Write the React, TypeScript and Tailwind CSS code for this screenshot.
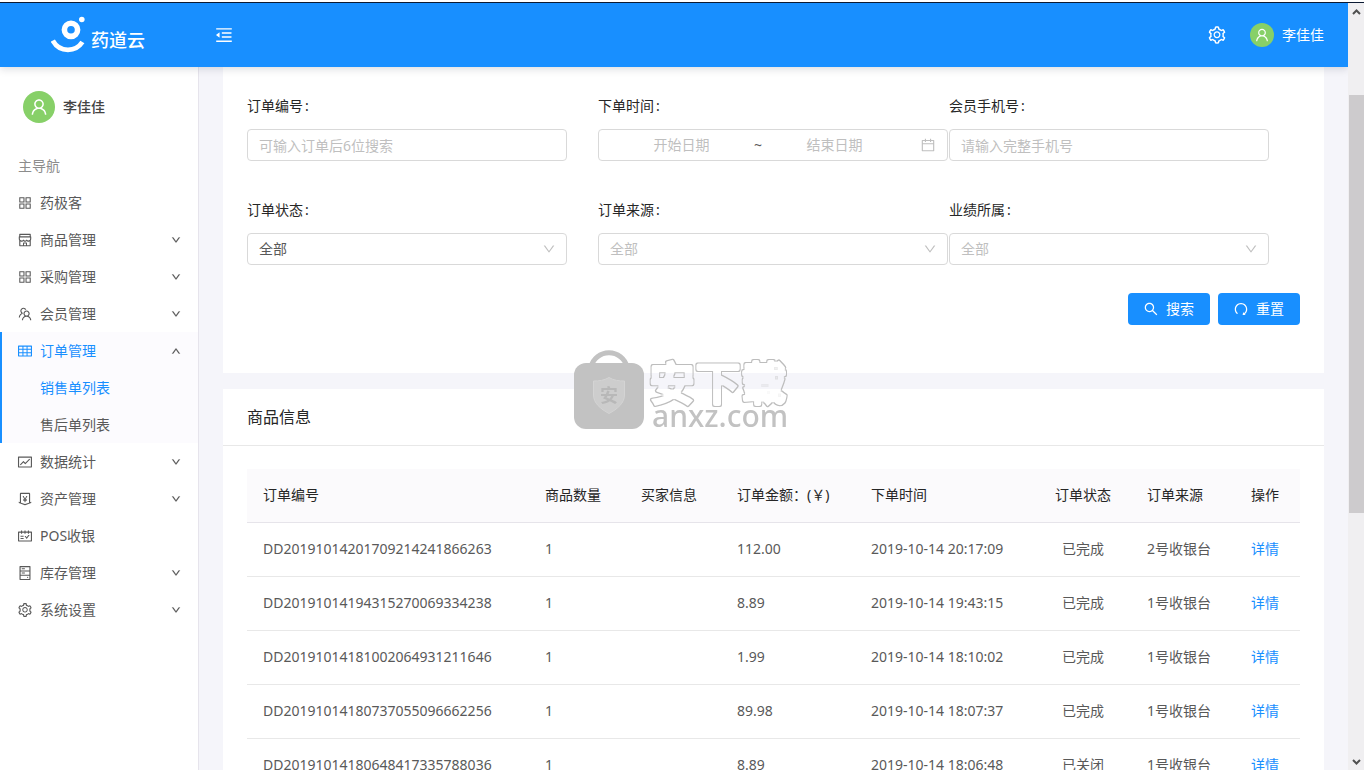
import type { ReactNode } from 'react';
import type { IconType } from 'react-icons';
import {
    AiOutlineAppstore,
    AiOutlineCalendar,
    AiOutlineDown,
    AiOutlineFund,
    AiOutlineHdd,
    AiOutlineMenuFold,
    AiOutlineMoneyCollect,
    AiOutlineRedo,
    AiOutlineSchedule,
    AiOutlineSearch,
    AiOutlineSetting,
    AiOutlineShop,
    AiOutlineTable,
    AiOutlineTeam,
    AiOutlineUp,
    AiOutlineUser,
} from 'react-icons/ai';

type NavItem = {
    label: string;
    icon: IconType;
    expandable?: boolean;
    children?: { label: string; active?: boolean }[];
};

const navItems: NavItem[] = [
    { label: '药极客', icon: AiOutlineAppstore },
    { label: '商品管理', icon: AiOutlineShop, expandable: true },
    { label: '采购管理', icon: AiOutlineAppstore, expandable: true },
    { label: '会员管理', icon: AiOutlineTeam, expandable: true },
    {
        label: '订单管理',
        icon: AiOutlineTable,
        expandable: true,
        children: [{ label: '销售单列表', active: true }, { label: '售后单列表' }],
    },
    { label: '数据统计', icon: AiOutlineFund, expandable: true },
    { label: '资产管理', icon: AiOutlineMoneyCollect, expandable: true },
    { label: 'POS收银', icon: AiOutlineSchedule },
    { label: '库存管理', icon: AiOutlineHdd, expandable: true },
    { label: '系统设置', icon: AiOutlineSetting, expandable: true },
];

const orders = [
    { id: 'DD20191014201709214241866263', count: 1, amount: '112.00', time: '2019-10-14 20:17:09', status: '已完成', source: '2号收银台' },
    { id: 'DD20191014194315270069334238', count: 1, amount: '8.89', time: '2019-10-14 19:43:15', status: '已完成', source: '1号收银台' },
    { id: 'DD20191014181002064931211646', count: 1, amount: '1.99', time: '2019-10-14 18:10:02', status: '已完成', source: '1号收银台' },
    { id: 'DD20191014180737055096662256', count: 1, amount: '89.98', time: '2019-10-14 18:07:37', status: '已完成', source: '1号收银台' },
    { id: 'DD20191014180648417335788036', count: 1, amount: '8.89', time: '2019-10-14 18:06:48', status: '已关闭', source: '1号收银台' },
];

function Logo() {
    return (
        <svg width="34" height="37" viewBox="51 16 34 37" fill="none" stroke="#fff" aria-hidden="true">
            <circle cx="71" cy="29.8" r="6.6" strokeWidth="5.6" />
            <circle cx="81.8" cy="19.5" r="2.8" fill="#fff" stroke="none" />
            <path d="M52.8 40.6C56 46.5 61.5 49.8 68 49.8c6.400 0 11-2.600 14.400-7.800" strokeWidth="4.800" />
        </svg>
    );
}

function Header() {
    return (
        <header className="relative z-10 flex h-16 shrink-0 items-center bg-[#188fff] text-white shadow-[0_2px_8px_rgba(0,21,41,0.15)]">
            <a href="#" className="flex w-[214px] shrink-0 items-end gap-[6px] pb-[2px] pl-[51px]">
                <Logo />
                <span className="text-lg leading-[26px] font-medium">药道云</span>
            </a>
            <button aria-label="收起菜单">
                <AiOutlineMenuFold className="size-5" />
            </button>
            <div className="ml-auto flex items-center pr-6">
                <button aria-label="设置">
                    <AiOutlineSetting className="size-5" />
                </button>
                <a href="#" className="ml-[23px] flex items-center gap-2">
                    <span className="flex size-6 items-center justify-center rounded-full bg-[#87d068]">
                        <AiOutlineUser className="size-4" />
                    </span>
                    李佳佳
                </a>
            </div>
        </header>
    );
}

function Sidebar() {
    return (
        <aside className="w-[199px] shrink-0 border-r border-[#e6e4ec] bg-white">
            <div className="flex items-center gap-2 pt-6 pl-[23px]">
                <span className="flex size-8 items-center justify-center rounded-full bg-[#87d068] text-white">
                    <AiOutlineUser className="size-5" />
                </span>
                <span className="font-medium text-[#444]">李佳佳</span>
            </div>
            <p className="mt-[33px] mb-2 pl-[18px] text-[#8c8c8c]">主导航</p>
            <nav>
                {navItems.map((item) => {
                    const open = Boolean(item.children);
                    const Icon = item.icon;
                    const Arrow = open ? AiOutlineUp : AiOutlineDown;
                    const row = (
                        <>
                            <Icon className="size-4" />
                            <span>{item.label}</span>
                        </>
                    );
                    const tone = open ? 'text-[#188fff]' : '';
                    return (
                        <div key={item.label} className={open ? 'border-l-2 border-[#188fff] bg-[#fcfbfe]' : 'border-l-2 border-transparent'}>
                            {item.expandable ? (
                                <button aria-expanded={open} className={`flex h-[37px] w-full items-center gap-[7px] pr-[17px] pl-[15px] ${tone}`}>
                                    {row}
                                    <Arrow className="ml-auto size-[10px] text-[#444]" strokeWidth="40" />
                                </button>
                            ) : (
                                <a href="#" className="flex h-[37px] items-center gap-[7px] pl-[15px]">{row}</a>
                            )}
                            {item.children?.map((child) => (
                                <a key={child.label} href="#" className={`flex h-[37px] items-center pl-[38px] ${child.active ? 'text-[#188fff]' : ''}`}>
                                    {child.label}
                                </a>
                            ))}
                        </div>
                    );
                })}
            </nav>
        </aside>
    );
}

const control = 'h-8 w-full rounded border border-[#d9d9d9] bg-white px-[11px] placeholder:text-[#bfbfbf] outline-none';

function Field({ id, label, wide, children }: { id: string; label: string; wide?: boolean; children: ReactNode }) {
    return (
        <div className={wide ? 'pr-px' : 'pr-[31px]'}>
            <label htmlFor={id} className="mb-[3px] flex h-10 items-center gap-[2px] text-[#262626]">
                {label}
                <span>:</span>
            </label>
            {children}
        </div>
    );
}

function SelectBox({ id, muted }: { id: string; muted?: boolean }) {
    return (
        <div className="relative">
            <select id={id} className={`${control} appearance-none ${muted ? 'text-[#bfbfbf]' : ''}`}>
                <option>全部</option>
            </select>
            <AiOutlineDown className="pointer-events-none absolute top-[9px] right-[11px] size-[14px] text-[#bfbfbf]" />
        </div>
    );
}

function SearchForm() {
    return (
        <form className="bg-white px-6 pt-[19px] pb-12">
            <div className="grid grid-cols-3 gap-y-[29px]">
                <Field id="order-no" label="订单编号">
                    <input id="order-no" type="text" placeholder="可输入订单后6位搜索" className={control} />
                </Field>
                <Field id="start-date" label="下单时间" wide>
                    <div className="flex h-8 items-center rounded border border-[#d9d9d9] px-[11px]">
                        <input id="start-date" type="text" placeholder="开始日期" className="w-0 flex-1 text-center outline-none placeholder:text-[#bfbfbf]" />
                        <span className="w-[10px] text-center">~</span>
                        <input type="text" aria-label="结束日期" placeholder="结束日期" className="w-0 flex-1 text-center outline-none placeholder:text-[#bfbfbf]" />
                        <AiOutlineCalendar className="ml-[14px] size-4 text-[#bfbfbf]" />
                    </div>
                </Field>
                <Field id="phone" label="会员手机号">
                    <input id="phone" type="text" placeholder="请输入完整手机号" className={control} />
                </Field>
                <Field id="status" label="订单状态">
                    <SelectBox id="status" />
                </Field>
                <Field id="source" label="订单来源" wide>
                    <SelectBox id="source" muted />
                </Field>
                <Field id="owner" label="业绩所属">
                    <SelectBox id="owner" muted />
                </Field>
            </div>
            <div className="mt-7 flex justify-end gap-2">
                <button type="button" className="flex h-8 items-center gap-[7px] rounded bg-[#188fff] pr-4 pl-[15px] text-white">
                    <AiOutlineSearch className="size-4" />
                    搜索
                </button>
                <button type="reset" className="flex h-8 items-center gap-[7px] rounded bg-[#188fff] pr-4 pl-[15px] text-white">
                    <AiOutlineRedo className="size-4" />
                    重置
                </button>
            </div>
        </form>
    );
}

function OrderTable() {
    return (
        <section className="mt-4 bg-white">
            <h2 className="border-b border-[#e8e8e8] px-6 py-4 text-base leading-6 text-[#262626]">商品信息</h2>
            <div className="px-6 pt-[23px] pb-6">
                <table className="w-full table-fixed text-left">
                    <thead>
                        <tr className="h-[53px] border-b border-[#e6e4ea] bg-[#fbfafc] text-[#262626] *:px-4 *:font-normal">
                            <th>订单编号</th>
                            <th className="w-24">商品数量</th>
                            <th className="w-24">买家信息</th>
                            <th className="w-[134px] whitespace-nowrap">订单金额：(￥)</th>
                            <th className="w-[180px]">下单时间</th>
                            <th className="w-24 text-center">订单状态</th>
                            <th className="w-[104px]">订单来源</th>
                            <th className="w-[65px]">操作</th>
                        </tr>
                    </thead>
                    <tbody>
                        {orders.map((order) => (
                            <tr key={order.id} className="h-[54px] border-b border-[#e8e8e8] *:px-4">
                                <td>{order.id}</td>
                                <td>{order.count}</td>
                                <td></td>
                                <td>{order.amount}</td>
                                <td>{order.time}</td>
                                <td className="text-center">{order.status}</td>
                                <td>{order.source}</td>
                                <td><a href="#" className="text-[#188fff]">详情</a></td>
                            </tr>
                        ))}
                    </tbody>
                </table>
            </div>
        </section>
    );
}

function Scrollbar() {
    return (
        <div className="flex w-4 shrink-0 flex-col items-center bg-[#f0eff1]" aria-hidden="true">
            <svg className="h-[17px] w-4 shrink-0" viewBox="0 0 16 17" fill="none" stroke="#505050" strokeWidth="2">
                <path d="M5 11l3.500-3.500L12 11" />
            </svg>
            <div className="flex-[75]" />
            <div className="ml-px w-[15px] flex-[418] bg-[#cdcbcd]" />
            <div className="flex-[240]" />
            <svg className="h-[17px] w-4 shrink-0" viewBox="0 0 16 17" fill="none" stroke="#505050" strokeWidth="2">
                <path d="M5 7l3.500 3.500L12 7" />
            </svg>
        </div>
    );
}

function Watermark() {
    return (
        <div className="pointer-events-none fixed inset-0 z-20 flex items-center justify-center">
            <svg width="218" height="84" viewBox="0 0 218 84" aria-hidden="true">
                {/* keeps only the rim of the lettering */}
                <filter id="rim" filterUnits="userSpaceOnUse" x="0" y="0" width="218" height="84">
                    <feMorphology in="SourceGraphic" operator="erode" radius="1.3" result="inner" />
                    <feComposite in="SourceGraphic" in2="inner" operator="out" />
                </filter>
                <path d="M18 18a18.500 18.500 0 0 1 36 0" fill="none" stroke="#c2c2c2" strokeWidth="5" />
                <rect x="1" y="14" width="70" height="66" rx="12" fill="#c2c2c2" />
                <path d="M36 28.500c5 3 10 3.500 15.500 3.500v14c0 8-7 14-15.500 18.500C27.500 60 20.500 54 20.500 46V32c5.500 0 10.500-.5 15.500-3.500z" fill="#cdcdcd" stroke="#d4d4d4" />
                <text x="27" y="53" fontSize="18" fontWeight="700" fill="#b8b8b8">安</text>
                <text x="76" y="51" fontSize="46" fontWeight="700" fill="#bdbdbd" stroke="#bdbdbd" strokeWidth="4" strokeLinejoin="round" filter="url(#rim)">安下载</text>
                <text x="79" y="78" fontSize="30" fontWeight="500" fill="#c2c2c2">anxz.com</text>
            </svg>
        </div>
    );
}

export default function App() {
    return (
        <div lang="zh-CN" className="flex h-screen flex-col bg-white pt-[2px] pb-3 font-['Noto_Sans','Noto_Sans_CJK_SC',sans-serif] text-sm text-[#595959]">
            <div className="flex min-h-0 flex-1 border-t border-[#0b1a33]">
                <div className="flex min-w-0 flex-1 flex-col overflow-hidden">
                    <Header />
                    <div className="flex min-h-0 flex-1">
                        <Sidebar />
                        <main className="min-w-0 flex-1 overflow-hidden bg-[#f5f5fa] px-6">
                            <SearchForm />
                            <OrderTable />
                        </main>
                    </div>
                </div>
                <Scrollbar />
            </div>
            <Watermark />
        </div>
    );
}
